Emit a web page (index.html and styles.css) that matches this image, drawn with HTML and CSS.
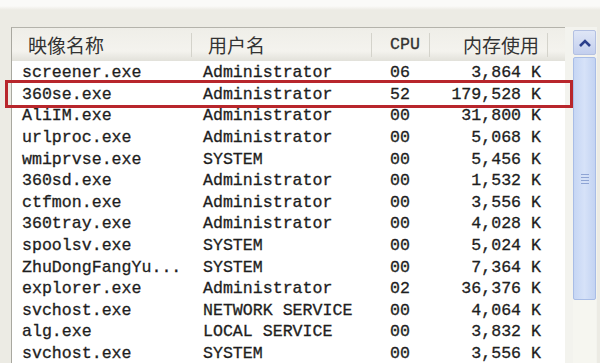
FILE: index.html
```html
<!DOCTYPE html>
<html lang="zh-CN">
  <head>
    <meta charset="UTF-8" />
    <meta name="viewport" content="width=device-width, initial-scale=1.0" />
    <title>任务管理器 - 进程</title>
    <link rel="stylesheet" href="styles.css">
  </head>
  <body>
    <section class="frame">
      <article class="list">
        <div class="row head">
          <div class="c-name">映像名称</div>
          <div class="c-user">用户名</div>
          <div class="c-cpu">CPU</div>
          <div class="c-mem">内存使用</div>
        </div>
        <div class="row"><div class="c-name">screener.exe</div><div class="c-user">Administrator</div><div class="c-cpu">06</div><div class="c-mem">3,864 K</div></div>
        <div class="row hl"><div class="c-name">360se.exe</div><div class="c-user">Administrator</div><div class="c-cpu">52</div><div class="c-mem">179,528 K</div></div>
        <div class="row"><div class="c-name">AliIM.exe</div><div class="c-user">Administrator</div><div class="c-cpu">00</div><div class="c-mem">31,800 K</div></div>
        <div class="row"><div class="c-name">urlproc.exe</div><div class="c-user">Administrator</div><div class="c-cpu">00</div><div class="c-mem">5,068 K</div></div>
        <div class="row"><div class="c-name">wmiprvse.exe</div><div class="c-user">SYSTEM</div><div class="c-cpu">00</div><div class="c-mem">5,456 K</div></div>
        <div class="row"><div class="c-name">360sd.exe</div><div class="c-user">Administrator</div><div class="c-cpu">00</div><div class="c-mem">1,532 K</div></div>
        <div class="row"><div class="c-name">ctfmon.exe</div><div class="c-user">Administrator</div><div class="c-cpu">00</div><div class="c-mem">3,556 K</div></div>
        <div class="row"><div class="c-name">360tray.exe</div><div class="c-user">Administrator</div><div class="c-cpu">00</div><div class="c-mem">4,028 K</div></div>
        <div class="row"><div class="c-name">spoolsv.exe</div><div class="c-user">SYSTEM</div><div class="c-cpu">00</div><div class="c-mem">5,024 K</div></div>
        <div class="row"><div class="c-name">ZhuDongFangYu...</div><div class="c-user">SYSTEM</div><div class="c-cpu">00</div><div class="c-mem">7,364 K</div></div>
        <div class="row"><div class="c-name">explorer.exe</div><div class="c-user">Administrator</div><div class="c-cpu">02</div><div class="c-mem">36,376 K</div></div>
        <div class="row"><div class="c-name">svchost.exe</div><div class="c-user">NETWORK SERVICE</div><div class="c-cpu">00</div><div class="c-mem">4,064 K</div></div>
        <div class="row"><div class="c-name">alg.exe</div><div class="c-user">LOCAL SERVICE</div><div class="c-cpu">00</div><div class="c-mem">3,832 K</div></div>
        <div class="row"><div class="c-name">svchost.exe</div><div class="c-user">SYSTEM</div><div class="c-cpu">00</div><div class="c-mem">3,556 K</div></div>
      </article>

      <aside class="scroll">
        <div class="scroll-up">
          <svg width="14" height="10" viewBox="0 0 14 10">
            <path d="M2 8 L7 3 L12 8" fill="none" stroke="#2b3f8c" stroke-width="2.6" />
          </svg>
        </div>
        <div class="scroll-thumb">
          <span></span><span></span><span></span><span></span>
        </div>
        <div class="scroll-track"></div>
      </aside>
    </section>
  </body>
</html>
```

FILE: styles.css
```css
* {
  margin: 0;
  padding: 0;
  box-sizing: border-box;
}

body {
  width: 600px;
  height: 363px;
  overflow: hidden;
  background: #fff;
}

.frame {
  height: 363px;
  display: flex;
  padding: 27px 3px 0 11px;
  background: linear-gradient(#fafaf8 0, #fafaf8 6px, #ecebe4 10px, #ecebe4 100%);
}

.list {
  flex: 1;
  position: relative;
  z-index: 1;
  background: #fff;
  border-left: 1px solid #a9a8a0;
  border-top: 1px solid #b4b3ab;
}

.row {
  display: grid;
  grid-template-columns: 180px 180px 58px 118px 1fr;
  height: 21.6px;
  align-items: center;
  font-family: "Liberation Mono", "DejaVu Sans Mono", monospace;
  font-size: 16.6px;
  color: #1e1e1e;
  -webkit-text-stroke: 0.3px #1e1e1e;
  white-space: nowrap;
}

.row.hl {
  position: relative;
}

.row.hl::after {
  content: "";
  position: absolute;
  left: -7px;
  right: -8px;
  top: -4px;
  bottom: -3px;
  border: 3px solid #b8262c;
}

.head {
  height: 33px;
  margin-bottom: 1px;
  background: linear-gradient(#efeee8, #f4f3ee 70%, #e2e1da);
  color: #333;
  -webkit-text-stroke: 0;
}

.head > div {
  height: 24px;
  line-height: 24px;
  border-right: 1px solid #d4d3cb;
  font-family: "Noto Sans CJK SC", sans-serif;
  font-size: 19px;
}

.head .c-name {
  padding-left: 16px;
}

.head .c-user {
  padding-left: 16px;
}

.head > .c-cpu {
  font-family: "Liberation Mono", monospace;
  font-size: 16.6px;
  -webkit-text-stroke: 0.3px #333;
}

.head .c-mem {
  padding-right: 8px;
}

.c-name {
  padding-left: 10px;
}

.c-user {
  padding-left: 11px;
}

.c-cpu {
  padding-left: 18px;
}

.c-mem {
  text-align: right;
  padding-right: 7px;
}

.scroll {
  width: 32px;
  display: flex;
  flex-direction: column;
  padding: 3px 1px 0 8px;
  background: #f3f3ee;
}

.scroll-up {
  height: 25px;
  display: flex;
  align-items: center;
  justify-content: center;
  background: linear-gradient(#dfe6f6, #c3cfee);
  border: 1px solid #b3c0e2;
  border-radius: 2px;
}

.scroll-thumb {
  height: 243px;
  margin-top: 2px;
  display: flex;
  flex-direction: column;
  align-items: center;
  justify-content: center;
  gap: 2px;
  background: linear-gradient(90deg, #c6d6f4, #d6e2f8 50%, #c3d3f2);
  border: 1px solid #a9bde6;
  border-radius: 2px;
}

.scroll-thumb span {
  width: 8px;
  height: 1px;
  background: #8ea4d4;
}

.scroll-track {
  flex: 1;
  background: #f6f6f0;
}
```
